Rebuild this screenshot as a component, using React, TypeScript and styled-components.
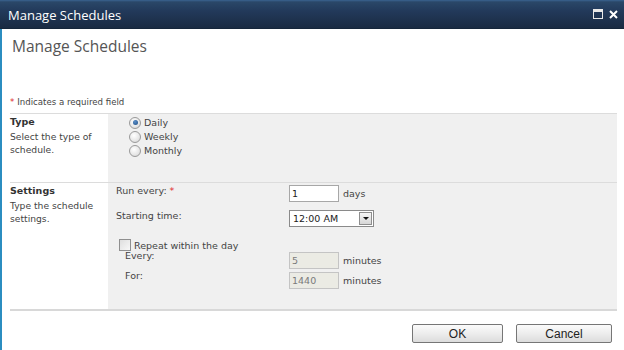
import React from "react";
import styled, { createGlobalStyle } from "styled-components";

const GlobalStyle = createGlobalStyle`
  html, body {
    margin: 0;
    padding: 0;
    background: #ffffff;
  }
  body {
    width: 624px;
    height: 350px;
    overflow: hidden;
  }
`;

const Dialog = styled.div`
  width: 624px;
  height: 350px;
  display: flex;
  flex-direction: column;
  font-family: "DejaVu Sans", Verdana, sans-serif;
  font-size: 9px;
  color: #333333;
`;

const TitleBar = styled.div`
  height: 28px;
  flex: none;
  display: flex;
  align-items: center;
  padding: 0 6px 0 8px;
  background: linear-gradient(#3a6390 0, #2a4768 2px, #22395a 40%, #1a2b42 100%);
  border-bottom: 1px solid #15263a;
`;

const TitleText = styled.div`
  flex: 1;
  color: #ffffff;
  font-family: "Open Sans", "Noto Sans", sans-serif;
  font-size: 13px;
  padding-top: 1px;
`;

const TitleIcons = styled.div`
  display: flex;
  align-items: center;
  gap: 6px;
`;

const Body = styled.div`
  flex: 1;
  display: flex;
  flex-direction: column;
  border-left: 2px solid #2b8dc0;
  padding: 0 7px 0 8px;
`;

const Heading = styled.div`
  font-family: "Open Sans", "Noto Sans", sans-serif;
  font-size: 15.5px;
  color: #555555;
  padding: 6px 0 0 2px;
  height: 62px;
  box-sizing: border-box;
`;

const RequiredNote = styled.div`
  height: 22px;
  display: flex;
  align-items: center;
  color: #444444;
  font-size: 8.6px;
`;

const Star = styled.span`
  color: #e0262c;
  margin-right: 3px;
`;

const Section = styled.div<{ $height: number }>`
  display: grid;
  grid-template-columns: 98px 1fr;
  height: ${(p) => p.$height}px;
  border-top: 1px solid #dcdcdc;
`;

const SideCol = styled.div`
  padding: 0;
`;

const SideTitle = styled.div`
  font-weight: bold;
  font-size: 9.5px;
  color: #333333;
  height: 14px;
  display: flex;
  align-items: center;
`;

const SideText = styled.div`
  color: #444444;
  line-height: 13px;
  padding-top: 2px;
  font-size: 9.2px;
`;

const FieldCol = styled.div`
  background: #f0f0f0;
`;

const RadioList = styled.div`
  display: flex;
  flex-direction: column;
  padding: 2px 0 0 21px;
  gap: 1px;
`;

const RadioRow = styled.label`
  display: flex;
  align-items: center;
  height: 13px;
  gap: 3px;
  color: #444444;
  font-size: 9.5px;
`;

const RadioDot = styled.span<{ $checked?: boolean }>`
  width: 10px;
  height: 10px;
  border-radius: 50%;
  border: 1px solid #9a9a9a;
  background: radial-gradient(circle at 40% 35%, #ffffff 0, #e6e6e6 60%, #cfcfcf 100%);
  display: flex;
  align-items: center;
  justify-content: center;
  &::after {
    content: "";
    display: ${(p) => (p.$checked ? "block" : "none")};
    width: 5px;
    height: 5px;
    border-radius: 50%;
    background: radial-gradient(circle at 40% 35%, #5a8ec8 0, #1f4f86 100%);
  }
`;

const SettingsGrid = styled.div`
  display: grid;
  grid-template-columns: 173px auto;
  grid-auto-rows: min-content;
  padding: 2px 0 0 8px;
  align-items: center;
`;

const FieldLabel = styled.div<{ $indent?: number; $shift?: number }>`
  color: #444444;
  font-size: 9.5px;
  padding-left: ${(p) => p.$indent ?? 0}px;
  align-self: start;
  margin-top: ${(p) => p.$shift ?? 0}px;
`;

const Control = styled.div<{ $mb?: number }>`
  display: flex;
  align-items: center;
  gap: 4px;
  margin-bottom: ${(p) => p.$mb ?? 0}px;
`;

const TextBox = styled.div<{ $disabled?: boolean }>`
  width: 46px;
  height: 15px;
  border: 1px solid ${(p) => (p.$disabled ? "#c4c4c4" : "#a7a7a7")};
  background: ${(p) => (p.$disabled ? "#ebebe4" : "#ffffff")};
  color: ${(p) => (p.$disabled ? "#7a7a7a" : "#222222")};
  font-size: 9.5px;
  display: flex;
  align-items: center;
  padding-left: 2px;
  box-sizing: content-box;
`;

const Unit = styled.span`
  color: #444444;
  font-size: 9.5px;
`;

const SelectBox = styled.div`
  width: 83px;
  height: 15px;
  border: 1px solid #8a8a8a;
  background: #ffffff;
  display: flex;
  align-items: center;
  font-size: 9.5px;
  color: #222222;
`;

const SelectValue = styled.span`
  flex: 1;
  padding-left: 3px;
`;

const SelectButton = styled.span`
  width: 11px;
  height: 11px;
  margin-right: 1px;
  border: 1px solid #8e8e8e;
  background: linear-gradient(#f6f6f6, #d6d6d6);
  display: flex;
  align-items: center;
  justify-content: center;
  &::after {
    content: "";
    border-left: 3px solid transparent;
    border-right: 3px solid transparent;
    border-top: 3px solid #111111;
  }
`;

const CheckRow = styled.div`
  grid-column: 1 / -1;
  display: flex;
  align-items: center;
  gap: 3px;
  padding-left: 3px;
  height: 14px;
  color: #444444;
  font-size: 9.5px;
`;

const CheckBox = styled.span`
  width: 10px;
  height: 10px;
  border: 1px solid #8f8f8f;
  background: linear-gradient(135deg, #dedede, #f8f8f8);
`;

const Footer = styled.div`
  border-top: 2px solid #d8d8d8;
  display: flex;
  justify-content: flex-end;
  gap: 13px;
  padding: 13px 5px 0 0;
`;

const Button = styled.button<{ $width: number }>`
  width: ${(p) => p.$width}px;
  height: 19px;
  border: 1px solid #767676;
  border-radius: 2px;
  background: linear-gradient(#fbfbfb 0, #ededed 50%, #dcdcdc 100%);
  font-family: "Liberation Sans", Arial, sans-serif;
  font-size: 12px;
  color: #222222;
  padding: 0;
`;

const MaximizeIcon = () => (
  <svg width="10" height="10" viewBox="0 0 10 10">
    <rect x="0.5" y="0.5" width="9" height="9" fill="none" stroke="#e8e8e8" strokeWidth="1" />
    <rect x="0.5" y="0.5" width="9" height="2.5" fill="#e8e8e8" />
  </svg>
);

const CloseIcon = () => (
  <svg width="9" height="9" viewBox="0 0 9 9">
    <path d="M1 1 L8 8 M8 1 L1 8" stroke="#ffffff" strokeWidth="2" />
  </svg>
);

export default function App() {
  return (
    <>
      <GlobalStyle />
      <Dialog>
        <TitleBar>
          <TitleText>Manage Schedules</TitleText>
          <TitleIcons>
            <MaximizeIcon />
            <CloseIcon />
          </TitleIcons>
        </TitleBar>
        <Body>
          <Heading>Manage Schedules</Heading>
          <RequiredNote>
            <Star>*</Star>Indicates a required field
          </RequiredNote>

          <Section $height={68}>
            <SideCol>
              <SideTitle>Type</SideTitle>
              <SideText>
                Select the type of
                <br />
                schedule.
              </SideText>
            </SideCol>
            <FieldCol>
              <RadioList>
                <RadioRow>
                  <RadioDot $checked />
                  Daily
                </RadioRow>
                <RadioRow>
                  <RadioDot />
                  Weekly
                </RadioRow>
                <RadioRow>
                  <RadioDot />
                  Monthly
                </RadioRow>
              </RadioList>
            </FieldCol>
          </Section>

          <Section $height={126}>
            <SideCol>
              <SideTitle>Settings</SideTitle>
              <SideText>
                Type the schedule
                <br />
                settings.
              </SideText>
            </SideCol>
            <FieldCol>
              <SettingsGrid>
                <FieldLabel>
                  Run every: <Star>*</Star>
                </FieldLabel>
                <Control $mb={8}>
                  <TextBox>1</TextBox>
                  <Unit>days</Unit>
                </Control>
                <FieldLabel>Starting time:</FieldLabel>
                <Control $mb={11}>
                  <SelectBox>
                    <SelectValue>12:00 AM</SelectValue>
                    <SelectButton />
                  </SelectBox>
                </Control>
                <CheckRow>
                  <CheckBox />
                  Repeat within the day
                </CheckRow>
                <FieldLabel $indent={9} $shift={-2}>
                  Every:
                </FieldLabel>
                <Control $mb={3}>
                  <TextBox $disabled>5</TextBox>
                  <Unit>minutes</Unit>
                </Control>
                <FieldLabel $indent={9} $shift={-2}>
                  For:
                </FieldLabel>
                <Control>
                  <TextBox $disabled>1440</TextBox>
                  <Unit>minutes</Unit>
                </Control>
              </SettingsGrid>
            </FieldCol>
          </Section>

          <Footer>
            <Button $width={91}>OK</Button>
            <Button $width={96}>Cancel</Button>
          </Footer>
        </Body>
      </Dialog>
    </>
  );
}
